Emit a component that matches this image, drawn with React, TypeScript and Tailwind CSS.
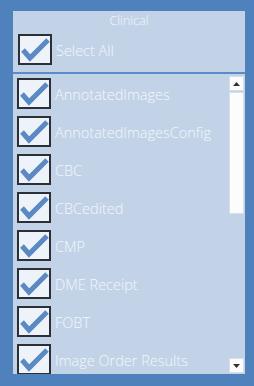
import React from 'react';

const items = [
  'AnnotatedImages',
  'AnnotatedImagesConfig',
  'CBC',
  'CBCedited',
  'CMP',
  'DME Receipt',
  'FOBT',
  'Image Order Results',
];

function CheckBox() {
  return (
    <div className="w-[34px] h-[31px] shrink-0 border-2 border-[#2b2f36] bg-[#eef3fa] flex items-center justify-center">
      <svg width="30" height="27" viewBox="0 0 30 27">
        <path d="M3 14 L10 22 L28 4" fill="none" stroke="#5a89c3" strokeWidth="5" strokeLinecap="butt" strokeLinejoin="miter" />
      </svg>
    </div>
  );
}

export default function App() {
  return (
    <div
      className="w-[254px] h-[386px] bg-[#4f81bd] pt-[11px] pl-[13px] pr-[9px] pb-[12px]"
      style={{ fontFamily: '"Open Sans", "Noto Sans", sans-serif' }}
    >
      <div className="h-full bg-[#c2d3e8] flex flex-col overflow-hidden">
        <div className="h-[61px] shrink-0 flex flex-col">
          <div className="h-[20px] pt-[1px] text-center text-[12.5px] leading-[17px] font-light text-[#f4f7fb]">Clinical</div>
          <div className="flex items-center gap-[4px] pl-[5px] mt-[3px]">
            <CheckBox />
            <span className="text-[14.5px] pt-[3px] font-light text-[#f4f7fb]">Select All</span>
          </div>
        </div>
        <div className="h-[2px] shrink-0 bg-[#5b8bc9]" />
        <div className="flex-1 flex min-h-0">
          <div className="flex-1 flex flex-col pt-[4px] pl-[4px] gap-[7px] overflow-hidden">
            {items.map((name) => (
              <div key={name} className="flex items-center gap-[4px] shrink-0">
                <CheckBox />
                <span className="text-[14.5px] pt-[3px] font-light text-[#f4f7fb] whitespace-nowrap">{name}</span>
              </div>
            ))}
          </div>
          <div className="w-[15px] mr-[1px] pt-[2px] pb-[1px] flex flex-col">
            <div className="h-[15px] bg-[#fcfcfc] border border-[#d8dee6] flex items-center justify-center">
              <svg width="7" height="4" viewBox="0 0 7 4"><path d="M0 4 L3.5 0 L7 4 Z" fill="#333" /></svg>
            </div>
            <div className="h-[122px] mt-[1px] bg-[#fcfcfc] border border-[#d8dee6]" />
            <div className="flex-1" />
            <div className="h-[15px] bg-[#fcfcfc] border border-[#d8dee6] flex items-center justify-center">
              <svg width="7" height="4" viewBox="0 0 7 4"><path d="M0 0 L7 0 L3.5 4 Z" fill="#333" /></svg>
            </div>
          </div>
        </div>
      </div>
    </div>
  );
}
